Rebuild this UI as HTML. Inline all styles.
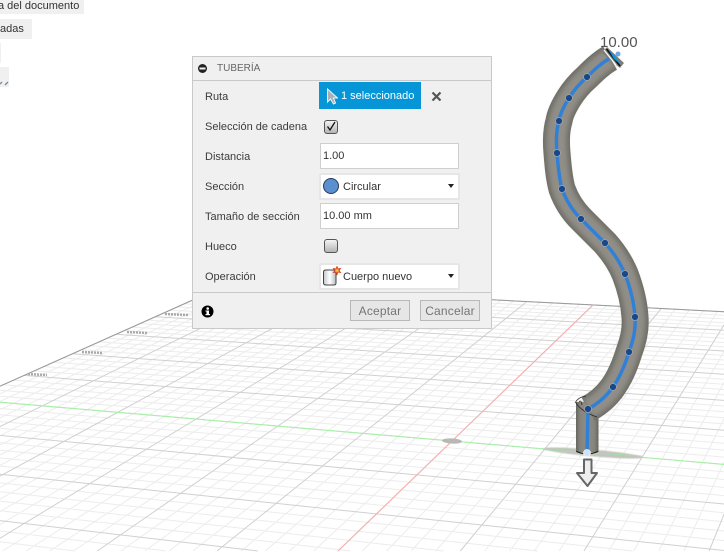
<!DOCTYPE html>
<html><head><meta charset="utf-8"><style>
html,body{margin:0;padding:0;background:#fff;overflow:hidden;width:724px;height:552px}
#w{position:relative;width:724px;height:552px;overflow:hidden;font-family:"Liberation Sans",sans-serif;font-size:11px;color:#333}
.a{position:absolute;white-space:nowrap}
.chip{background:#f0f0f0;line-height:14px}
.dlg{left:192px;top:56px;width:298px;height:271px;background:#f0f0f0;border:1px solid #c9c9c9}
.lab{left:205px;height:14px;line-height:14px;color:#3c3c3c}
.inp{left:320px;width:137px;height:24px;background:#fff;border:1px solid #cfcfcf;line-height:25px;text-indent:2px;color:#333}
.sel{left:319px;width:137px;height:23px;background:#fff;border:2px solid #e6e6e6;line-height:24px;border-radius:2px}
.cb{left:324px;width:12px;height:12px;border:1px solid #555;border-radius:3px;background:linear-gradient(#f4f4f4,#b4b4b4)}
.btn{top:300px;height:19px;background:#e6e6e6;border:1px solid #b8b8b8;color:#757575;font-size:12px;line-height:20px;text-align:center;letter-spacing:.2px}
.arr{width:0;height:0;border-left:3.5px solid transparent;border-right:3.5px solid transparent;border-top:4px solid #222}
</style></head><body><div id="w">
<svg class="a" id="g" style="left:0;top:0" width="724" height="552" viewBox="0 0 724 552"></svg>
<svg class="a" style="left:0;top:0" width="724" height="552" viewBox="0 0 724 552">
<defs>
<linearGradient id="st" x1="0" x2="1" y1="0" y2="0"><stop offset="0" stop-color="#66655f"/><stop offset=".18" stop-color="#85837b"/><stop offset=".5" stop-color="#8f8d85"/><stop offset=".82" stop-color="#85837b"/><stop offset="1" stop-color="#66655f"/></linearGradient>
<filter id="b1" x="-20%" y="-20%" width="140%" height="140%"><feGaussianBlur stdDeviation="2.500"/></filter>
<filter id="b2"><feGaussianBlur stdDeviation=".5"/></filter>
</defs>
<ellipse cx="452" cy="441" rx="10" ry="2.600" fill="#b8b8b4" transform="rotate(3 452 441)"/>
<ellipse cx="593" cy="453" rx="50" ry="3.400" fill="#c2c2be" transform="rotate(5 593 453)" filter="url(#b2)"/>
<path d="M543 449.500L642 456" stroke="#9ce89c" stroke-width="1" opacity=".7"/>
<rect x="576" y="402" width="22.500" height="50" fill="url(#st)"/>
<path d="M576.500 451.500Q587 456 598 451.500" fill="none" stroke="#111" stroke-width="1"/>
<path d="M610 58C600 64 593 71 587 77C579 84 574 90 569 98C564 106 560 114 559 121C556 131 556 142 557 153C558 166 559 178 562 189C566 200 573 211 581 219C589 227 597 235 605 243C613 252 620 262 625 274C630 287 634 302 635 317C636 330 633 341 629 352C625 365 620 377 613 387C606 397 597 404 588 409" fill="none" stroke="#6f6e67" stroke-width="27"/>
<path d="M610 58C600 64 593 71 587 77C579 84 574 90 569 98C564 106 560 114 559 121C556 131 556 142 557 153C558 166 559 178 562 189C566 200 573 211 581 219C589 227 597 235 605 243C613 252 620 262 625 274C630 287 634 302 635 317C636 330 633 341 629 352C625 365 620 377 613 387C606 397 597 404 588 409" fill="none" stroke="#908e86" stroke-width="20" filter="url(#b1)"/>
<path d="M575 403Q578 397 586 396M576 403Q582 412 597 417M579 402Q581 399 582 405" fill="none" stroke="#2a2a28" stroke-width=".8"/>
<path d="M587 453L588 409C597 404 606 397 613 387C620 377 625 365 629 352C633 341 636 330 635 317C634 302 630 287 625 274C620 262 613 252 605 243C597 235 589 227 581 219C573 211 566 200 562 189C559 178 558 166 557 153C556 142 556 131 559 121C560 114 564 106 569 98C574 90 579 84 587 77C593 71 600 64 610 58" fill="none" stroke="#2f80d8" stroke-width="3.400"/>
<g fill="#17488c" stroke="#a4a8ac" stroke-width=".8">
<circle cx="587" cy="77" r="3.500"/><circle cx="569" cy="98" r="3.500"/><circle cx="559" cy="121" r="3.500"/><circle cx="557" cy="153" r="3.500"/><circle cx="562" cy="189" r="3.500"/><circle cx="581" cy="219" r="3.500"/><circle cx="605" cy="243" r="3.500"/><circle cx="625" cy="274" r="3.500"/><circle cx="635" cy="317" r="3.500"/><circle cx="629" cy="352" r="3.500"/><circle cx="613" cy="387" r="3.500"/><circle cx="588" cy="409" r="3.500"/>
</g>
<circle cx="587" cy="453" r="3.500" fill="#cfe2f7" stroke="#eef" stroke-width=".8"/>
<path d="M607 47L624 63L620 68L602 53Z" fill="#7e7d77"/>
<path d="M606.500 49L620 66" stroke="#111" stroke-width="1.500"/>
<path d="M608 49L615 56L620 64L614 59Z" fill="#0c96e0"/>
<path d="M604 50L616 65" stroke="#fff" stroke-width="1.200"/>
<circle cx="618" cy="54" r="2.500" fill="#6aa8e8"/>
<path d="M584 459.500H591.500V473H597L587.500 486L577 473H584Z" fill="#eee" stroke="#666" stroke-width="2" stroke-linejoin="round"/>
</svg>
<div class="a" style="left:600px;top:34px;font-size:15px;line-height:17px;color:#555">10.00</div>

<div class="a chip" style="left:0;top:0;width:84px;height:14px;text-indent:-2px;color:#333;overflow:hidden;line-height:12px">a del documento</div>
<div class="a chip" style="left:0;top:19px;width:32px;height:20px;line-height:21px">adas</div>
<div class="a chip" style="left:0;top:43px;width:1px;height:20px"></div>
<div class="a chip" style="left:0;top:67px;width:9px;height:20px"></div>
<svg class="a" style="left:0;top:80px" width="10" height="6"><path d="M0 4L2 2M5 5L8 2" stroke="#78889c" stroke-width="1.300"/></svg>

<div class="a dlg"></div>
<div class="a" style="left:193px;top:80px;width:298px;height:1px;background:#c9c9c9"></div>
<div class="a" style="left:193px;top:292px;width:298px;height:1px;background:#c9c9c9"></div>
<svg class="a" style="left:197px;top:63px" width="11" height="11"><circle cx="5.500" cy="5.500" r="4.500" fill="#222"/><rect x="2.500" y="4.500" width="6" height="2" fill="#f0f0f0"/></svg>
<div class="a" style="left:217px;top:62px;line-height:14px;color:#666;font-size:10px">TUBERÍA</div>

<div class="a lab" style="top:90px">Ruta</div>
<div class="a" style="left:319px;top:82px;width:102px;height:27px;background:#0696d7;color:#fff;line-height:28px;text-indent:22px">1 seleccionado</div>
<svg class="a" style="left:326px;top:88px" width="12" height="18"><path d="M2 1V14L5 11L8 16L10 15L8 10H12Z" transform="translate(-.5 0)" fill="#a9b0b6" stroke="#f6f6f6" stroke-width="1"/></svg>
<svg class="a" style="left:431px;top:91px" width="11" height="11"><path d="M1.500 1.500L9.500 9.500M9.500 1.500L1.500 9.500" stroke="#555" stroke-width="2.200"/></svg>

<div class="a lab" style="top:120px">Selección de cadena</div>
<div class="a cb" style="top:120px"></div>
<svg class="a" style="left:325px;top:120px" width="12" height="13"><path d="M2.500 6.500L5 10L10 2" fill="none" stroke="#111" stroke-width="1.300"/></svg>

<div class="a lab" style="top:150px">Distancia</div>
<div class="a inp" style="top:143px">1.00</div>

<div class="a lab" style="top:180px">Sección</div>
<div class="a sel" style="top:173px"><span class="a" style="left:22px;top:0">Circular</span></div>
<svg class="a" style="left:322px;top:177px" width="18" height="18"><circle cx="9" cy="9" r="7.500" fill="#5a8fd0" stroke="#2b3a55" stroke-width="1"/></svg>
<div class="a arr" style="left:448px;top:184px"></div>

<div class="a lab" style="top:210px">Tamaño de sección</div>
<div class="a inp" style="top:203px">10.00 mm</div>

<div class="a lab" style="top:240px">Hueco</div>
<div class="a cb" style="top:239px"></div>

<div class="a lab" style="top:270px">Operación</div>
<div class="a sel" style="top:263px"><span class="a" style="left:22px;top:0">Cuerpo nuevo</span></div>
<svg class="a" style="left:322px;top:266px" width="20" height="20"><defs><linearGradient id="cy" x1="0" x2="1" y1="0" y2="0"><stop offset="0" stop-color="#c4c8cc"/><stop offset=".5" stop-color="#fff"/><stop offset="1" stop-color="#b8bcc0"/></linearGradient></defs><path d="M1.500 6Q1.500 4 4 4H12Q14 4 14 6V17Q14 19 12 19H4Q1.500 19 1.500 17Z" fill="url(#cy)" stroke="#444" stroke-width="1"/><path d="M15 .5L16 3L18.500 2.500L17 4.500L18.500 6.500L16 6L15 8.500L14 6L11.500 6.500L13 4.500L11.500 2.500L14 3Z" fill="#f5c040" stroke="#d83010" stroke-width=".8"/></svg>
<div class="a arr" style="left:448px;top:274px"></div>

<svg class="a" style="left:201px;top:305px" width="13" height="13"><circle cx="6.500" cy="6.500" r="6" fill="#000"/><rect x="5.500" y="5.500" width="2.500" height="4.500" fill="#fff"/><rect x="4.500" y="5.500" width="2" height="1" fill="#fff"/><rect x="4.500" y="9" width="4.500" height="1.200" fill="#fff"/><circle cx="6.700" cy="3.500" r="1.300" fill="#fff"/></svg>
<div class="a btn" style="left:350px;width:58px">Aceptar</div>
<div class="a btn" style="left:420px;width:58px">Cancelar</div>
</div>
<script>
(function(){
var x0=-30,y0=399.6,x1=452,y1=441,x2=593,y2=305,x3=224,y3=286;
var dx1=x1-x2,dx2=x3-x2,sx=x0-x1+x2-x3,dy1=y1-y2,dy2=y3-y2,sy=y0-y1+y2-y3;
var den=dx1*dy2-dx2*dy1,g=(sx*dy2-dx2*sy)/den,h=(dx1*sy-sx*dy1)/den;
var a=x1-x0+g*x1,b=x3-x0+h*x3,c=x0,d=y1-y0+g*y1,e=y3-y0+h*y3,f=y0;
function P(u,v){var s=(u+6)/6,t=v/6,w=g*s+h*t+1;return [(a*s+b*t+c)/w,(d*s+e*t+f)/w]}
/* Clip each segment to the frame so no line extends past it */
function L(u1,v1,u2,v2){
  var A=P(u1,v1),B=P(u2,v2),t0=0,t1=1,ax=B[0]-A[0],ay=B[1]-A[1];
  var ps=[-ax,ax,-ay,ay],qs=[A[0],724-A[0],A[1],551-A[1]];
  for(var k=0;k<4;k++){
    if(ps[k]===0){if(qs[k]<0)return '';continue}
    var m=qs[k]/ps[k];
    if(ps[k]<0){if(m>t1)return '';if(m>t0)t0=m}
    else{if(m<t0)return '';if(m<t1)t1=m}
  }
  return 'M'+(A[0]+t0*ax).toFixed(1)+' '+(A[1]+t0*ay).toFixed(1)+'L'+(A[0]+t1*ax).toFixed(1)+' '+(A[1]+t1*ay).toFixed(1);
}
var minor='',major='',U0=-6,U1=6,V0=-6,V1=6,i,q,r;
for(i=U0*5;i<=U1*5;i++){q=i/5;r=L(q,V0,q,V1);if(i%5)minor+=r;else major+=r}
for(i=V0*5;i<=V1*5;i++){q=i/5;r=L(U0,q,U1,q);if(i%5)minor+=r;else major+=r}
var o='<path d="'+minor+'" stroke="#ececec" stroke-width="1" fill="none"/>';
o+='<path d="'+major+'" stroke="#d0d0d0" stroke-width="1" fill="none"/>';
o+='<path d="'+L(U0,V1,U1,V1)+'" stroke="#999" stroke-width="1" fill="none"/>';
o+='<path d="'+L(U0,0,U0,V1)+'" stroke="#999" stroke-width="1" fill="none"/>';
o+='<path d="'+L(U0,0,U1,0)+'" stroke="#a8f0a8" stroke-width="1.100" fill="none"/>';
o+='<path d="'+L(0,V0,0,V1)+'" stroke="#f7aeae" stroke-width="1.100" fill="none"/>';
[[28,374,19],[82,352,21],[127,332,21],[165,314,23]].forEach(function(p){o+='<path d="M'+p[0]+' '+p[1]+'l'+p[2]+' 1" stroke="#aaa" stroke-width="2.500" stroke-dasharray="2 1" fill="none"/>'});
document.getElementById('g').innerHTML=o;
})();
</script>
</body></html>
